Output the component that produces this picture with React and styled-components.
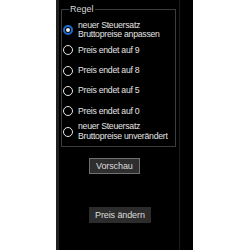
import React, { useState } from "react";
import styled, { createGlobalStyle } from "styled-components";

const Global = createGlobalStyle`
  html, body { margin: 0; padding: 0; background: #fff; }
  body { font-family: "Liberation Sans", Arial, sans-serif; }
`;

const Page = styled.div`
  display: flex;
  height: 250px;
  padding-left: 56px;
`;

const Panel = styled.div`
  display: flex;
  width: 134px;
  background: #000;
  border-left: 3px solid #1f1f1f;
`;

const Column = styled.div`
  width: 118px;
  padding-left: 2px;
  border-right: 1px solid #1c1c1c;
  display: flex;
  flex-direction: column;
`;

const Group = styled.fieldset`
  margin: 4px 0 0 0;
  width: 115px;
  box-sizing: border-box;
  padding: 5px 0 4px 1px;
  border: 1px solid #3c3c3c;
  display: flex;
  flex-direction: column;
`;

const Legend = styled.legend`
  margin-left: 6px;
  padding: 0 1px;
  color: #d6d6d6;
  font-size: 9px;
  line-height: 11px;
`;

const Option = styled.label`
  display: flex;
  align-items: center;
  gap: 5px;
  height: 20.3px;
  color: #e4e4e4;
  font-size: 8.7px;
  letter-spacing: -0.25px;
  line-height: 9.5px;
  cursor: pointer;
`;

const Dot = styled.span`
  flex: 0 0 auto;
  width: 10px;
  height: 10px;
  box-sizing: border-box;
  border-radius: 50%;
  border: ${(p) => (p.$on ? "2px solid #1a6fd6" : "1.5px solid #e8e8e8")};
  display: flex;
  align-items: center;
  justify-content: center;
  &::after {
    content: "";
    width: 4px;
    height: 4px;
    border-radius: 50%;
    background: ${(p) => (p.$on ? "#f2f2f2" : "transparent")};
  }
`;

const Text = styled.span`
  white-space: pre;
`;

const Button = styled.button`
  align-self: flex-start;
  margin-left: ${(p) => p.$left}px;
  margin-top: ${(p) => p.$top}px;
  height: 16px;
  padding: 0 ${(p) => (p.$bordered ? 6 : 6)}px;
  font-family: inherit;
  font-size: 9px;
  letter-spacing: -0.1px;
  color: #dcdcdc;
  background: ${(p) => (p.$bordered ? "#2e2e2e" : "#2c2c2c")};
  border: ${(p) => (p.$bordered ? "1px solid #707070" : "none")};
  border-radius: 0;
`;

const options = [
  "neuer Steuersatz\nBruttopreise anpassen",
  "Preis endet auf 9",
  "Preis endet auf 8",
  "Preis endet auf 5",
  "Preis endet auf 0",
  "neuer Steuersatz\nBruttopreise unverändert",
];

export default function App() {
  const [sel, setSel] = useState(0);
  return (
    <>
      <Global />
      <Page>
        <Panel>
          <Column>
            <Group>
              <Legend>Regel</Legend>
              {options.map((o, i) => (
                <Option key={i} onClick={() => setSel(i)}>
                  <Dot $on={sel === i} />
                  <Text>{o}</Text>
                </Option>
              ))}
            </Group>
            <Button $bordered $left={28} $top={11}>Vorschau</Button>
            <Button $left={28} $top={33}>Preis ändern</Button>
          </Column>
        </Panel>
      </Page>
    </>
  );
}
